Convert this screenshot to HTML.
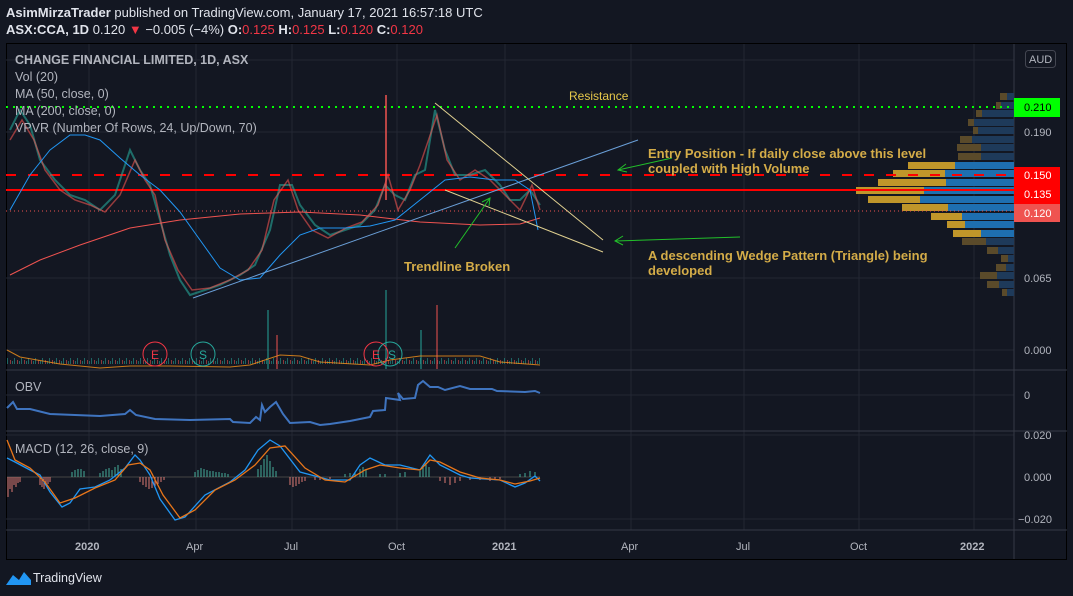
<!DOCTYPE html>
<html><head><meta charset="utf-8"><style>
body{margin:0;width:1073px;height:596px;background:#131722;overflow:hidden;font-family:"Liberation Sans",sans-serif;}
.t{position:absolute;white-space:nowrap}
</style></head><body>
<div class="t" style="left:6px;top:5px;font-size:13px;color:#e0e3eb"><b>AsimMirzaTrader</b> published on TradingView.com, January 17, 2021 16:57:18 UTC</div>
<div class="t" style="left:6px;top:22px;font-size:13px;color:#e0e3eb"><b>ASX:CCA, 1D</b> 0.120 <span style="color:#f23645">▼</span> −0.005 (−4%) <b>O:</b><span style="color:#f23645">0.125</span> <b>H:</b><span style="color:#f23645">0.125</span> <b>L:</b><span style="color:#f23645">0.120</span> <b>C:</b><span style="color:#f23645">0.120</span></div>
<svg width="1073" height="596" style="position:absolute;left:0;top:0" font-family="Liberation Sans, sans-serif">
<defs>
<pattern id="vp" width="7" height="14" patternUnits="userSpaceOnUse"><rect x="0" y="8" width="1" height="6" fill="#26a69a"/><rect x="3" y="10" width="1" height="4" fill="#ef5350"/><rect x="5" y="11" width="1" height="3" fill="#26a69a"/></pattern>
</defs>
<rect x="6.5" y="43.5" width="1060" height="516" fill="#131722" stroke="#000" />
<g stroke="#232733" stroke-width="1">
<line x1="89" y1="44" x2="89" y2="530"/><line x1="196" y1="44" x2="196" y2="530"/><line x1="292" y1="44" x2="292" y2="530"/><line x1="397" y1="44" x2="397" y2="530"/><line x1="505" y1="44" x2="505" y2="530"/><line x1="631" y1="44" x2="631" y2="530"/><line x1="744" y1="44" x2="744" y2="530"/><line x1="859" y1="44" x2="859" y2="530"/><line x1="974" y1="44" x2="974" y2="530"/>
<line x1="6" y1="60" x2="1014" y2="60"/><line x1="6" y1="132" x2="1014" y2="132"/><line x1="6" y1="278" x2="1014" y2="278"/><line x1="6" y1="350" x2="1014" y2="350"/><line x1="6" y1="395" x2="1014" y2="395"/><line x1="6" y1="435" x2="1014" y2="435"/><line x1="6" y1="519" x2="1014" y2="519"/>
</g>
<g stroke="#363a45"><line x1="6" y1="370" x2="1067" y2="370"/><line x1="6" y1="431" x2="1067" y2="431"/><line x1="6" y1="530" x2="1067" y2="530"/><line x1="1014" y1="44" x2="1014" y2="559"/></g>
<g>
<rect x="1000" y="93" width="7" height="7" fill="#5a4a2a"/><rect x="1007" y="93" width="7" height="7" fill="#1e3a5a"/>
<rect x="996" y="102" width="5" height="7" fill="#5a4a2a"/><rect x="1001" y="102" width="13" height="7" fill="#1e3a5a"/>
<rect x="976" y="110" width="6" height="7" fill="#5a4a2a"/><rect x="982" y="110" width="32" height="7" fill="#1e3a5a"/>
<rect x="968" y="119" width="6" height="7" fill="#5a4a2a"/><rect x="974" y="119" width="40" height="7" fill="#1e3a5a"/>
<rect x="973" y="127" width="5" height="7" fill="#5a4a2a"/><rect x="978" y="127" width="36" height="7" fill="#1e3a5a"/>
<rect x="960" y="136" width="12" height="7" fill="#5a4a2a"/><rect x="972" y="136" width="42" height="7" fill="#1e3a5a"/>
<rect x="957" y="144" width="24" height="7" fill="#5a4a2a"/><rect x="981" y="144" width="33" height="7" fill="#1e3a5a"/>
<rect x="958" y="153" width="23" height="7" fill="#5a4a2a"/><rect x="981" y="153" width="33" height="7" fill="#1e3a5a"/>
<rect x="908" y="162" width="47" height="7" fill="#c0962a"/><rect x="955" y="162" width="59" height="7" fill="#1e6fb0"/>
<rect x="893" y="170" width="52" height="7" fill="#c0962a"/><rect x="945" y="170" width="69" height="7" fill="#1e6fb0"/>
<rect x="878" y="179" width="68" height="7" fill="#c0962a"/><rect x="946" y="179" width="68" height="7" fill="#1e6fb0"/>
<rect x="856" y="187" width="68" height="7" fill="#c0962a"/><rect x="924" y="187" width="90" height="7" fill="#1e6fb0"/>
<rect x="868" y="196" width="52" height="7" fill="#c0962a"/><rect x="920" y="196" width="94" height="7" fill="#1e6fb0"/>
<rect x="902" y="204" width="46" height="7" fill="#c0962a"/><rect x="948" y="204" width="66" height="7" fill="#1e6fb0"/>
<rect x="931" y="213" width="31" height="7" fill="#c0962a"/><rect x="962" y="213" width="52" height="7" fill="#1e6fb0"/>
<rect x="947" y="221" width="18" height="7" fill="#c0962a"/><rect x="965" y="221" width="49" height="7" fill="#1e6fb0"/>
<rect x="953" y="230" width="28" height="7" fill="#c0962a"/><rect x="981" y="230" width="33" height="7" fill="#1e6fb0"/>
<rect x="962" y="238" width="24" height="7" fill="#5a4a2a"/><rect x="986" y="238" width="28" height="7" fill="#1e3a5a"/>
<rect x="987" y="247" width="11" height="7" fill="#5a4a2a"/><rect x="998" y="247" width="16" height="7" fill="#1e3a5a"/>
<rect x="1001" y="255" width="7" height="7" fill="#5a4a2a"/><rect x="1008" y="255" width="6" height="7" fill="#1e3a5a"/>
<rect x="996" y="264" width="10" height="7" fill="#5a4a2a"/><rect x="1006" y="264" width="8" height="7" fill="#1e3a5a"/>
<rect x="980" y="272" width="17" height="7" fill="#5a4a2a"/><rect x="997" y="272" width="17" height="7" fill="#1e3a5a"/>
<rect x="987" y="281" width="12" height="7" fill="#5a4a2a"/><rect x="999" y="281" width="15" height="7" fill="#1e3a5a"/>
<rect x="1002" y="289" width="5" height="7" fill="#5a4a2a"/><rect x="1007" y="289" width="7" height="7" fill="#1e3a5a"/>
</g>
<line x1="6" y1="107" x2="1014" y2="107" stroke="#00ff00" stroke-width="2" stroke-dasharray="2,5"/>
<line x1="6" y1="175" x2="1014" y2="175" stroke="#ff0000" stroke-width="2" stroke-dasharray="10,12"/>
<line x1="6" y1="190" x2="1014" y2="190" stroke="#ff0000" stroke-width="2"/>
<line x1="6" y1="211" x2="1014" y2="211" stroke="#ef5350" stroke-width="1" stroke-dasharray="1,3"/>
<polyline fill="none" stroke="#26a69a" stroke-width="2" opacity="0.6" points="10,130 20,110 30,125 40,160 55,180 70,195 85,200 100,210 115,195 130,150 140,170 150,185 160,220 170,255 180,280 190,295 205,290 220,285 240,275 255,265 270,230 280,185 292,185 300,205 315,225 330,235 345,230 360,225 375,210 385,185 395,195 405,200 415,175 425,170 435,110 445,150 455,175 470,175 485,170 500,185 510,200 520,200 530,190 540,205"/>
<polyline fill="none" stroke="#ef5350" stroke-width="1.5" opacity="0.6" points="10,140 22,120 34,140 45,170 60,190 75,200 90,205 105,212 120,195 135,160 145,180 155,195 165,240 178,270 192,290 210,288 230,280 248,270 262,250 274,200 288,180 298,210 312,230 328,238 346,228 362,222 378,205 388,175 398,210 410,190 420,165 437,115 447,160 460,180 475,170 490,180 505,195 520,210 532,185 540,210"/>
<polyline fill="none" stroke="#ef5350" stroke-width="1.5" points="386,95 386,200"/>
<polyline fill="none" stroke="#ef5350" stroke-width="1" points="10,275 40,260 80,245 130,228 180,220 240,214 300,212 360,215 420,222 480,225 520,224 540,218"/>
<polyline fill="none" stroke="#2196f3" stroke-width="1" points="10,210 30,175 50,150 70,135 85,135 100,140 120,158 140,175 160,190 180,212 200,240 220,268 240,280 260,278 280,255 300,235 320,228 345,228 370,226 395,220 420,200 445,180 470,177 495,180 515,180 530,190 538,230"/>
<line x1="193" y1="298" x2="638" y2="140" stroke="#6a9fd8" stroke-width="1"/>
<line x1="435" y1="103" x2="603" y2="240" stroke="#e0d090" stroke-width="1"/>
<line x1="445" y1="190" x2="603" y2="252" stroke="#e0d090" stroke-width="1"/>
<g stroke="#22c02a" stroke-width="1" fill="none">
<line x1="672" y1="158" x2="618" y2="170"/><polyline points="626,164 618,170 627,172"/>
<line x1="740" y1="237" x2="615" y2="241"/><polyline points="623,236 615,241 623,245"/>
<line x1="455" y1="248" x2="490" y2="198"/><polyline points="482,202 490,198 489,206"/>
</g>
<text x="569" y="100" font-size="12" fill="#e6c84a">Resistance</text>
<g font-size="13" font-weight="bold" fill="#d4ac48">
<text x="648" y="158">Entry Position - If daily close above this level</text>
<text x="648" y="173">coupled with High Volume</text>
<text x="648" y="260">A descending Wedge Pattern (Triangle) being</text>
<text x="648" y="275">developed</text>
<text x="404" y="271">Trendline Broken</text>
</g>
<g font-size="12.5" fill="#b2b5be">
<text x="15" y="64" font-weight="bold">CHANGE FINANCIAL LIMITED, 1D, ASX</text>
<text x="15" y="81">Vol (20)</text><text x="15" y="98">MA (50, close, 0)</text><text x="15" y="115">MA (200, close, 0)</text><text x="15" y="132">VPVR (Number Of Rows, 24, Up/Down, 70)</text>
<text x="15" y="391">OBV</text><text x="15" y="453">MACD (12, 26, close, 9)</text>
</g>
<rect x="7" y="355" width="533" height="14" fill="url(#vp)" opacity="0.55"/>
<g stroke-width="1"><line x1="268" y1="310" x2="268" y2="369" stroke="#26a69a"/><line x1="386" y1="290" x2="386" y2="369" stroke="#26a69a"/><line x1="437" y1="305" x2="437" y2="369" stroke="#ef5350"/><line x1="277" y1="335" x2="277" y2="369" stroke="#ef5350"/><line x1="421" y1="330" x2="421" y2="369" stroke="#26a69a"/></g>
<polyline fill="none" stroke="#f7931a" stroke-width="1" opacity="0.8" points="7,350 20,357 60,364 100,368 130,366 170,366 230,367 250,365 265,360 280,355 300,356 320,362 370,365 390,360 420,356 480,356 500,362 540,365"/>
<g fill="none" stroke-width="1">
<circle cx="155" cy="354" r="12" stroke="#f23645"/><circle cx="203" cy="354" r="12" stroke="#26a69a"/><circle cx="376" cy="354" r="12" stroke="#f23645"/><circle cx="390" cy="354" r="12" stroke="#26a69a"/>
</g>
<g font-size="12"><text x="151" y="359" fill="#f23645">E</text><text x="199" y="359" fill="#26a69a">S</text><text x="372" y="359" fill="#f23645">E</text><text x="388" y="359" fill="#26a69a">S</text></g>
<polyline fill="none" stroke="#3f74bf" stroke-width="2" points="7,408 13,402 17,409 30,409 50,414 100,416 125,414 130,410 136,415 155,419 190,420 230,419 233,422 250,423 256,417 260,420 262,405 265,412 270,407 276,402 283,414 290,423 310,422 320,425 330,424 350,421 370,417 373,411 385,410 386,398 400,400 398,393 403,399 415,398 418,385 423,381 430,387 438,387 445,390 460,386 470,389 492,389 497,391 525,392 535,391 540,393"/>
<line x1="7" y1="477" x2="540" y2="477" stroke="#444" stroke-width="1"/>
<g opacity="0.85">
<path d="M8,477v20 M10,477v12 M12,477v15 M14,477v8 M16,477v10 M18,477v6 M20,477v5 M40,477v8 M42,477v10 M44,477v12 M46,477v9 M48,477v7 M50,477v5" stroke="#ff8a80" stroke-width="1"/>
<path d="M72,477v-5 M75,477v-7 M78,477v-8 M81,477v-8 M84,477v-6 M100,477v-4 M103,477v-6 M106,477v-8 M109,477v-9 M112,477v-7 M115,477v-10 M118,477v-12 M121,477v-8" stroke="#4ec9b0" stroke-width="1"/>
<path d="M140,477v5 M143,477v8 M146,477v10 M149,477v12 M152,477v11 M155,477v9 M158,477v7 M161,477v5 M164,477v3" stroke="#ff8a80" stroke-width="1"/>
<path d="M195,477v-5 M198,477v-7 M201,477v-9 M204,477v-8 M207,477v-7 M210,477v-6 M213,477v-6 M216,477v-5 M219,477v-5 M222,477v-4 M225,477v-4 M228,477v-3 M258,477v-8 M261,477v-12 M264,477v-18 M267,477v-22 M270,477v-16 M273,477v-10 M276,477v-6" stroke="#4ec9b0" stroke-width="1"/>
<path d="M290,477v8 M293,477v10 M296,477v9 M299,477v7 M302,477v5 M305,477v4 M315,477v3 M320,477v3 M330,477v2" stroke="#ff8a80" stroke-width="1"/>
<path d="M345,477v-3 M350,477v-4 M355,477v-4 M360,477v-8 M363,477v-10 M366,477v-7 M380,477v-3 M385,477v-3 M400,477v-4 M405,477v-5 M420,477v-6 M423,477v-10 M426,477v-14 M429,477v-10" stroke="#4ec9b0" stroke-width="1"/>
<path d="M440,477v4 M445,477v6 M450,477v8 M455,477v6 M460,477v4 M470,477v3 M480,477v3 M490,477v4 M495,477v3 M500,477v2" stroke="#ff8a80" stroke-width="1"/>
<path d="M520,477v-3 M525,477v-4 M530,477v-6 M535,477v-5" stroke="#4ec9b0" stroke-width="1"/>
</g>
<polyline fill="none" stroke="#2196f3" stroke-width="1.3" points="7,458 15,462 30,470 40,475 50,492 62,507 70,503 80,489 95,487 110,480 125,468 135,455 140,460 150,475 160,499 175,520 185,517 205,495 230,482 245,470 258,450 270,440 280,446 300,472 330,480 350,480 360,465 370,458 385,465 400,465 420,470 430,455 440,465 460,475 470,478 500,480 515,487 525,483 535,476 540,481"/>
<polyline fill="none" stroke="#e8761a" stroke-width="1.3" points="7,440 15,460 30,468 45,482 60,503 75,498 95,488 115,480 128,465 140,463 150,470 163,495 180,518 195,510 215,490 235,480 255,465 270,448 285,446 305,468 325,480 345,482 365,470 380,465 400,468 420,470 430,460 440,462 460,472 480,478 500,480 515,484 530,481 540,478"/>
<g font-size="11" fill="#b2b5be"><text x="1024" y="136">0.190</text><text x="1024" y="282">0.065</text><text x="1024" y="354">0.000</text><text x="1024" y="399">0</text><text x="1024" y="439">0.020</text><text x="1024" y="481">0.000</text><text x="1018" y="523">−0.020</text></g>
<rect x="1025.5" y="50.5" width="30" height="17" rx="3" fill="none" stroke="#434651"/><text x="1029" y="63" font-size="11" fill="#b2b5be">AUD</text>
<rect x="1014" y="98" width="46" height="19" fill="#00ff00"/><text x="1024" y="111" font-size="11" fill="#000">0.210</text>
<rect x="1014" y="167" width="46" height="37" fill="#ff0000"/><text x="1024" y="179" font-size="11" fill="#fff">0.150</text><text x="1024" y="198" font-size="11" fill="#fff">0.135</text>
<rect x="1014" y="204" width="46" height="18" fill="#ef5350"/><text x="1024" y="217" font-size="11" fill="#fff">0.120</text>
<g font-size="11" fill="#b2b5be"><text x="75" y="550" font-weight="bold">2020</text><text x="186" y="550">Apr</text><text x="284" y="550">Jul</text><text x="388" y="550">Oct</text><text x="492" y="550" font-weight="bold">2021</text><text x="621" y="550">Apr</text><text x="736" y="550">Jul</text><text x="850" y="550">Oct</text><text x="960" y="550" font-weight="bold">2022</text></g>
<path d="M6,585 L13,575 L19,580 L24,572 L31,580 V585 Z" fill="#2196f3"/>
<text x="33" y="582" font-size="12.5" fill="#e0e3eb">TradingView</text>
</svg>
</body></html>
